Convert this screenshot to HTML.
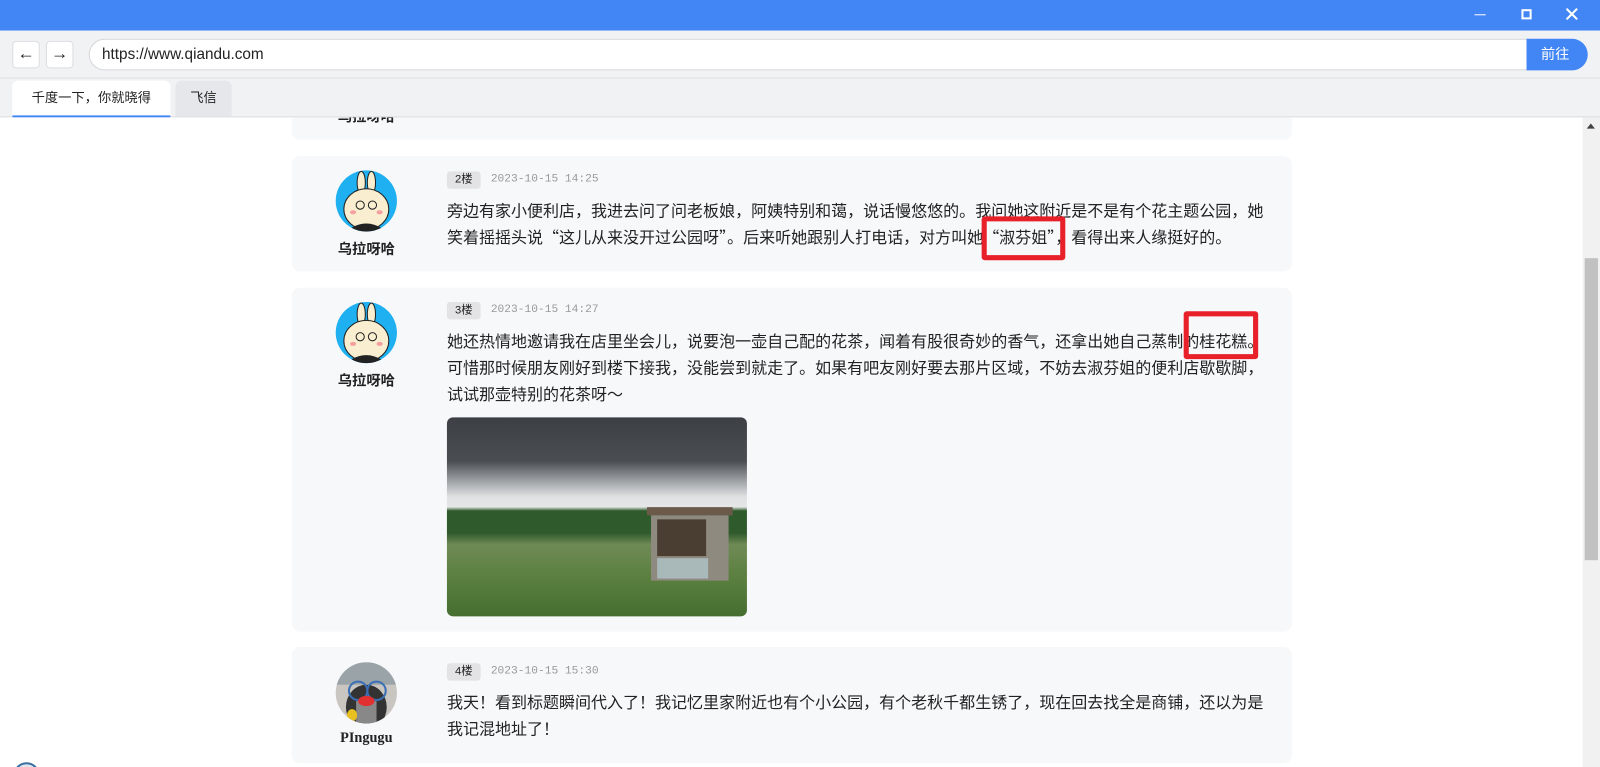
<!DOCTYPE html>
<html><head><meta charset="utf-8">
<style>
*{margin:0;padding:0;box-sizing:border-box}
html,body{width:1600px;height:767px;overflow:hidden;background:#fff}
#w{position:absolute;left:0;top:0;width:1568px;height:752px;transform:scale(1.020408);transform-origin:0 0;font-family:"Liberation Sans","Noto Sans CJK SC",sans-serif;color:#222;overflow:hidden}
.title{position:absolute;left:0;top:0;width:1568px;height:30px;background:#4285f4;z-index:5}
.tb{position:absolute;left:0;top:30px;width:1568px;height:47px;background:#f1f2f4;border-bottom:1px solid #dcdde0;z-index:5}
.nb{position:absolute;top:40px;width:27px;height:27px;background:#fff;border:1px solid #dcdde0;border-radius:4px;font-size:17px;line-height:23px;text-align:center;color:#222;z-index:6}
.url{position:absolute;left:87px;top:38px;width:1410px;height:31px;background:#fff;border:1px solid #d6d7da;border-radius:16px 0 0 16px;font-size:15px;line-height:29px;padding-left:12px;color:#222;z-index:6}
.go{position:absolute;left:1496px;top:38px;width:60px;height:31px;background:#4285f4;color:#fff;border-radius:0 16px 16px 0;font-size:14px;line-height:31px;text-align:center;padding-right:4px;z-index:6}
.tabs{position:absolute;left:0;top:77px;width:1568px;height:38px;background:#f1f2f4;border-bottom:1px solid #dcdde0;z-index:5}
.tab1{position:absolute;left:12px;top:79px;width:155px;height:36px;background:#fff;border-radius:6px 6px 0 0;border-bottom:2px solid #4285f4;font-size:13px;line-height:34px;text-align:center;z-index:6}
.tab2{position:absolute;left:172px;top:79px;width:55px;height:35px;background:#e6e7ea;border-radius:6px 6px 0 0;font-size:13px;line-height:34px;text-align:center;z-index:6}
.card{position:absolute;left:286px;width:980px;background:#f7f8fa;border-radius:8px}
.av{position:absolute;left:43px;width:60px;height:60px;border-radius:50%;overflow:hidden}
.name{position:absolute;left:0;width:146px;text-align:center;font-weight:bold;font-size:14px;font-family:"Noto Sans CJK SC",sans-serif}
.tag{position:absolute;left:152px;height:17px;width:33px;background:#e3e3e5;border-radius:3px;font-size:11px;line-height:17px;text-align:center}
.date{position:absolute;left:195px;font-family:"Liberation Mono",monospace;font-size:11px;color:#999;line-height:17px}
.txt{position:absolute;left:152px;font-size:15.7px;line-height:26px;white-space:nowrap;color:#222;font-family:"Noto Sans CJK SC",sans-serif}
.rb{position:absolute;border:5px solid #e8202a;border-radius:3px;z-index:3}
.sb{position:absolute;left:1551px;top:115px;width:17px;height:640px;background:#f1f1f1}
</style></head><body><div id="w">
<div class="title"></div>
<div style="position:absolute;left:1445px;top:14px;width:11px;height:1px;background:#fff;z-index:6"></div>
<div style="position:absolute;left:1491px;top:9px;width:10px;height:10px;border:2px solid #fff;z-index:6"></div>
<div style="position:absolute;left:1532px;top:2px;color:#fff;font-size:20px;line-height:26px;z-index:6">✕</div>
<div class="tb"></div>
<div class="nb" style="left:12px">←</div>
<div class="nb" style="left:45px">→</div>
<div class="url">https://www.qiandu.com</div>
<div class="go">前往</div>
<div class="tabs"></div>
<div class="tab1">千度一下，你就晓得</div>
<div class="tab2">飞信</div>

<div class="card" style="top:90px;height:47px;"><div class="name" style="top:14px">乌拉呀哈</div></div>

<div class="card" style="top:153px;height:113px">
 <div class="av" style="top:14px;background:#1eb0f0">
  <svg width="60" height="60"><ellipse cx="25" cy="12" rx="4" ry="11" fill="#f9eed0" stroke="#222"/><ellipse cx="35" cy="12" rx="4" ry="11" fill="#f9eed0" stroke="#222"/><ellipse cx="30" cy="38" rx="22" ry="20" fill="#f9eed0" stroke="#222"/><circle cx="24" cy="34" r="4" fill="none" stroke="#222"/><circle cx="36" cy="34" r="4" fill="none" stroke="#222"/><ellipse cx="17" cy="41" rx="3" ry="2" fill="#f5a0a0"/><ellipse cx="43" cy="41" rx="3" ry="2" fill="#f5a0a0"/><path d="M10 60 Q30 44 50 60Z" fill="#222"/></svg>
 </div>
 <div class="name" style="top:81px">乌拉呀哈</div>
 <div class="tag" style="top:15px">2楼</div><div class="date" style="top:15px">2023-10-15 14:25</div>
 <div class="txt" style="top:40px">旁边有家小便利店，我进去问了问老板娘，阿姨特别和蔼，说话慢悠悠的。我问她这附近是不是有个花主题公园，她<br>笑着摇摇头说“这儿从来没开过公园呀”。后来听她跟别人打电话，对方叫她“淑芬姐”，看得出来人缘挺好的。</div>
</div>
<div class="rb" style="left:962px;top:212px;width:82px;height:43px"></div>

<div class="card" style="top:282px;height:337px">
 <div class="av" style="top:14px;background:#1eb0f0">
  <svg width="60" height="60"><ellipse cx="25" cy="12" rx="4" ry="11" fill="#f9eed0" stroke="#222"/><ellipse cx="35" cy="12" rx="4" ry="11" fill="#f9eed0" stroke="#222"/><ellipse cx="30" cy="38" rx="22" ry="20" fill="#f9eed0" stroke="#222"/><circle cx="24" cy="34" r="4" fill="none" stroke="#222"/><circle cx="36" cy="34" r="4" fill="none" stroke="#222"/><ellipse cx="17" cy="41" rx="3" ry="2" fill="#f5a0a0"/><ellipse cx="43" cy="41" rx="3" ry="2" fill="#f5a0a0"/><path d="M10 60 Q30 44 50 60Z" fill="#222"/></svg>
 </div>
 <div class="name" style="top:81px">乌拉呀哈</div>
 <div class="tag" style="top:14px">3楼</div><div class="date" style="top:14px">2023-10-15 14:27</div>
 <div class="txt" style="top:39px">她还热情地邀请我在店里坐会儿，说要泡一壶自己配的花茶，闻着有股很奇妙的香气，还拿出她自己蒸制的桂花糕。<br>可惜那时候朋友刚好到楼下接我，没能尝到就走了。如果有吧友刚好要去那片区域，不妨去淑芬姐的便利店歇歇脚，<br>试试那壶特别的花茶呀～</div>
 <div style="position:absolute;left:152px;top:127px;width:294px;height:195px;border-radius:6px;overflow:hidden;background:linear-gradient(#3c4045 0%,#4a4e53 22%,#9ea2a6 32%,#dfe1e2 40%,#e5e6e7 45%,#2f5a2c 47%,#2f5a2c 58%,#6f8a55 64%,#5b8040 80%,#456e30 100%)">
  <div style="position:absolute;left:196px;top:88px;width:84px;height:8px;background:#6b5a4a"></div>
  <div style="position:absolute;left:200px;top:96px;width:76px;height:64px;background:#8e8a80"></div>
  <div style="position:absolute;left:206px;top:100px;width:48px;height:36px;background:#4a3d32"></div>
  <div style="position:absolute;left:206px;top:138px;width:50px;height:20px;background:#a9b8b8"></div>
 </div>
</div>
<div class="rb" style="left:1160px;top:305px;width:73px;height:47px"></div>

<div class="card" style="top:634px;height:114px">
 <div class="av" style="top:15px;background:#c9c6c2">
  <svg width="60" height="60"><rect width="60" height="22" fill="#9aa3a8"/><ellipse cx="30" cy="44" rx="20" ry="22" fill="#333"/><rect x="20" y="38" width="20" height="22" fill="#888"/><circle cx="22" cy="28" r="9" fill="none" stroke="#3a6fb5" stroke-width="2"/><circle cx="40" cy="28" r="9" fill="none" stroke="#3a6fb5" stroke-width="2"/><ellipse cx="30" cy="38" rx="8" ry="5" fill="#e03030"/><ellipse cx="16" cy="52" rx="5" ry="6" fill="#e8c020"/></svg>
 </div>
 <div class="name" style="top:82px;font-family:'Liberation Serif',serif">PIngugu</div>
 <div class="tag" style="top:16px">4楼</div><div class="date" style="top:16px">2023-10-15 15:30</div>
 <div class="txt" style="top:41px">我天！看到标题瞬间代入了！我记忆里家附近也有个小公园，有个老秋千都生锈了，现在回去找全是商铺，还以为是<br>我记混地址了！</div>
</div>

<div style="position:absolute;left:13px;top:747px;width:26px;height:26px;border-radius:50%;border:2px solid #3a6fa0;background:#dfe6ee"></div>

<div class="sb"></div>
<div style="position:absolute;left:1555px;top:121px;width:0;height:0;border-left:4px solid transparent;border-right:4px solid transparent;border-bottom:5px solid #444"></div>
<div style="position:absolute;left:1553px;top:253px;width:13px;height:296px;background:#c1c1c1"></div>
</div></body></html>
